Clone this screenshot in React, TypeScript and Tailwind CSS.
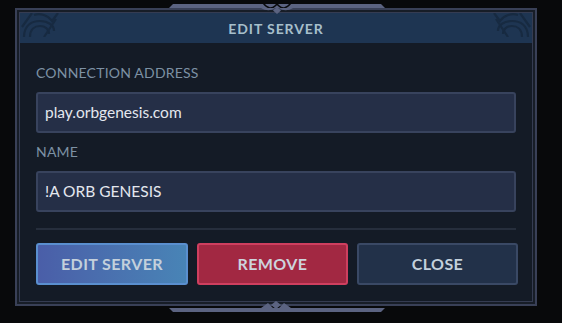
import React from 'react';

const font = { fontFamily: 'Lato, "Noto Sans", sans-serif' };

const Scallop = ({ flip }: { flip?: boolean }) => (
  <svg
    width="40"
    height="24"
    viewBox="0 0 40 24"
    className={flip ? 'absolute right-0 top-0 -scale-x-100' : 'absolute left-0 top-0'}
    fill="none"
    stroke="#172a41"
    strokeWidth="2.2"
  >
    <path d="M4 24 C4 12 12 8 20 8 C28 8 34 12 34 18" />
    <path d="M10 24 C10 16 15 13 20 13 C25 13 29 16 29 21" />
    <path d="M14 2 C20 0 28 2 32 8 L38 0" />
    <path d="M2 14 L12 0" />
    <path d="M24 24 L36 6" />
  </svg>
);

const TopTab = () => (
  <svg width="216" height="14" viewBox="0 0 216 14" className="absolute left-[169px] top-[1px]">
    <path d="M4 3 L212 3 L216 7 L0 7 Z" fill="#5b6381" />
    <path d="M94 2 C99 8 103 8 106 5 L108 3 L110 5 C113 8 117 8 122 2" fill="none" stroke="#08090b" strokeWidth="1.5" />
    <path d="M92 7 C97 10 102 10 106 7 L108 5 L110 7 C114 10 119 10 124 7 Z" fill="#5b6381" />
    <path d="M108 6 L112 9.5 L108 13 L104 9.5 Z" fill="#5b6381" />
  </svg>
);

const BottomTab = () => (
  <svg width="216" height="16" viewBox="0 0 216 16" className="absolute left-[169px] top-[300px]">
    <path d="M0 8 L216 8 L212 12 L4 12 Z" fill="#5b6381" />
    <path d="M107 1 L112 5 L107 9 L102 5 Z" fill="#5b6381" />
    <path d="M92 8 L99 3 L104 8 Z M110 8 L115 3 L122 8 Z" fill="#5b6381" />
  </svg>
);

const Field = ({ label, value }: { label: string; value: string }) => (
  <div className="flex flex-col">
    <div className="text-[14px] leading-[20px] text-[#7d91a4] tracking-[0.2px]">{label}</div>
    <div className="mt-[9px] h-[41px] rounded-[3px] border-2 border-[#38435d] bg-[#252f47] flex items-center px-[7px] text-[15.5px] text-[#e4e7ee]">
      {value}
    </div>
  </div>
);

export default function App() {
  return (
    <div className="relative w-[562px] h-[323px] overflow-hidden bg-[#08090b]" style={font}>
      <div className="pl-[15px] pt-[8px]">
        <div className="w-[522px] h-[298px] border-2 border-[#394057] bg-[#171d27] p-[2px]">
          <div className="h-full border border-[#353c52] bg-[#141b26] flex flex-col">
            <div className="relative h-[30px] shrink-0 bg-[#1e3552] flex items-center justify-center">
              <Scallop />
              <Scallop flip />
              <span className="text-[14px] font-bold tracking-[0.9px] text-[#a6bfcb]">EDIT SERVER</span>
            </div>
            <div className="flex flex-col px-[16px] pt-[20px]">
              <Field label="CONNECTION ADDRESS" value="play.orbgenesis.com" />
              <div className="h-[9px]" />
              <Field label="NAME" value="!A ORB GENESIS" />
              <div className="mt-[16px] h-[2px] bg-[#262e3c]" />
              <div className="mt-[13px] -mr-[2px] grid grid-cols-[152px_151px_1fr] gap-[9px]">
                <button className="h-[42px] rounded-[3px] border-2 border-[#5a8fcf] bg-gradient-to-r from-[#4a5ea8] to-[#4884b6] text-[16px] font-bold tracking-[0.4px] text-[#c3d0dc]">
                  EDIT SERVER
                </button>
                <button className="h-[42px] rounded-[3px] border-2 border-[#cf3f5f] bg-[#a22842] text-[16px] font-bold tracking-[0.4px] text-[#cdd3dc]">
                  REMOVE
                </button>
                <button className="h-[42px] rounded-[3px] border-2 border-[#3a4965] bg-[#223149] text-[16px] font-bold tracking-[0.4px] text-[#c3d0dc]">
                  CLOSE
                </button>
              </div>
            </div>
          </div>
        </div>
      </div>
      <TopTab />
      <BottomTab />
    </div>
  );
}
